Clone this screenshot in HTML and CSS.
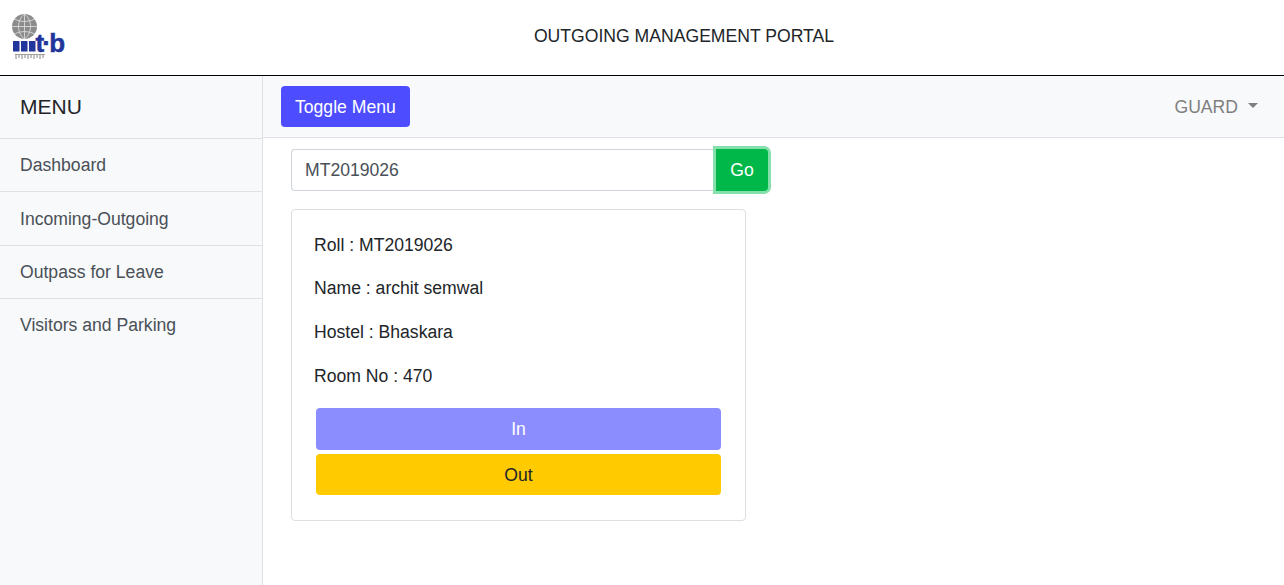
FILE: index.html
```html
<!DOCTYPE html>
<html lang="en">
<head>
<meta charset="utf-8">
<title>Outgoing Management Portal</title>
<link rel="stylesheet" href="styles.css">
</head>
<body>
<header class="top">
  <div class="logo">
    <svg width="60" height="50" viewBox="0 0 60 50" aria-hidden="true">
      <circle cx="12.500" cy="13.500" r="12.500" fill="#8c8c8c"/>
      <g fill="none" stroke="#e2e2e2" stroke-width="0.8">
        <path d="M0 13.500h25M2 6q10.500 5 21 0M2 21q10.500-5 21 0"/>
        <path d="M12.500 1v25M12.500 1c-8 6-8 19 0 25M12.500 1c8 6 8 19 0 25"/>
      </g>
      <g fill="#21359b">
        <rect x="1" y="28" width="6.500" height="10.500"/>
        <rect x="9" y="28" width="6.500" height="10.500"/>
        <rect x="17" y="28" width="6.500" height="10.500"/>
      </g>
      <text x="23.500" y="38.500" class="logo-word">t·b</text>
      <path d="M3 41.500h30" stroke="#777" stroke-width="0.7"/>
      <path d="M4 42v4M7 42v3M10 42v4M13 42v3M16 42v4M19 42v3M22 42v4M25 42v3M28 42v4M31 42v3" stroke="#777" stroke-width="0.9"/>
    </svg>
  </div>
  <div class="title">OUTGOING MANAGEMENT PORTAL</div>
</header>
<div class="layout">
  <aside class="sidebar">
    <div class="menu-head">MENU</div>
    <a class="menu-item">Dashboard</a>
    <a class="menu-item">Incoming-Outgoing</a>
    <a class="menu-item">Outpass for Leave</a>
    <a class="menu-item last">Visitors and Parking</a>
  </aside>
  <main class="main">
    <nav class="navbar">
      <button class="btn toggle">Toggle Menu</button>
      <div class="guard">GUARD<span class="caret"></span></div>
    </nav>
    <div class="content">
      <form class="search">
        <input class="search-input" value="MT2019026">
        <button type="button" class="btn go">Go</button>
      </form>
      <section class="card">
        <p class="line first">Roll : MT2019026</p>
        <p class="line l2">Name : archit semwal</p>
        <p class="line l3">Hostel : Bhaskara</p>
        <p class="line l3">Room No : 470</p>
        <div class="actions">
          <button class="btn act in">In</button>
          <button class="btn act out">Out</button>
        </div>
      </section>
    </div>
  </main>
</div>
</body>
</html>
```
FILE: styles.css
```css
* { box-sizing: border-box; }
html, body { margin: 0; height: 100%; }
body {
  font-family: "Liberation Sans", Arial, sans-serif;
  font-size: 17.600px;
  line-height: 1.5;
  color: #212529;
  background: #fff;
  overflow: hidden;
}
.top {
  height: 76px;
  border-bottom: 1px solid #000;
  display: flex;
  align-items: center;
  justify-content: center;
  position: relative;
}
.logo { position: absolute; left: 12px; top: 13px; line-height: 0; }
.logo-word {
  font-family: "Liberation Sans", Arial, sans-serif;
  font-weight: 700;
  font-size: 26px;
  letter-spacing: -1.800px;
  fill: #21359b;
  stroke: #21359b;
  stroke-width: 0.5px;
}
.title {
  margin-left: 84px;
  margin-bottom: 2px;
  color: #212529;
}
.layout { display: flex; height: 509px; }
.sidebar {
  width: 263px;
  flex: none;
  background: #f8f9fa;
  border-right: 1px solid #dee2e6;
}
.menu-head {
  height: 63px;
  padding: 15px 20px 0;
  font-size: 21px;
  border-bottom: 1px solid #dee2e6;
  color: #212529;
}
.menu-item {
  display: block;
  height: 53.300px;
  padding: 13.300px 20px 0;
  color: #495057;
  border-bottom: 1px solid #dee2e6;
}
.menu-item.last { border-bottom: 0; }
.main { flex: 1; min-width: 0; }
.navbar {
  height: 62px;
  background: #f8f9fa;
  border-bottom: 1px solid #dee2e6;
  display: flex;
  align-items: center;
  justify-content: space-between;
  padding: 0 26px 0 18px;
}
.btn {
  font-family: inherit;
  font-size: 17.600px;
  line-height: 26px;
  border: 0;
  border-radius: 4px;
  padding: 7px 14px;
  color: #fff;
}
.toggle { background: #4d4dff; height: 41px; }
.guard { color: #7f7f7f; display: flex; align-items: center; padding-top: 1px; }
.caret {
  margin-left: 10px;
  margin-top: -3px;
  border-top: 5.500px solid #7f7f7f;
  border-left: 5.500px solid transparent;
  border-right: 5.500px solid transparent;
}
.content { padding: 11px 0 0 28px; }
.search { display: flex; width: 477px; height: 42px; align-items: stretch; }
.search-input {
  flex: 1;
  min-width: 0;
  font-family: inherit;
  font-size: 17.600px;
  color: #495057;
  padding: 0 13px;
  border: 1px solid #ced4da;
  border-right: 0;
  border-radius: 4px 0 0 4px;
  background: #fff;
  outline: none;
}
.go {
  width: 52px;
  padding: 0;
  background: #00b84a;
  border-radius: 0 4px 4px 0;
  box-shadow: 0 0 0 3px #85e0ab;
  position: relative;
}
.card {
  width: 455px;
  height: 312px;
  margin-top: 18px;
  border: 1px solid #dfdfdf;
  border-radius: 4px;
  padding: 22px 24px 0 22px;
  color: #212529;
}
.line { margin: 0; line-height: 27px; }
.l2 { margin-top: 16px; }
.l3 { margin-top: 17px; }
.actions { margin-top: 18px; padding-left: 2px; display: flex; flex-direction: column; gap: 4px; }
.act { width: 405px; display: block; height: 41px; padding: 0; }
.in { background: #8b8dff; height: 42px; }
.out { background: #ffcb00; color: #212529; }
```
